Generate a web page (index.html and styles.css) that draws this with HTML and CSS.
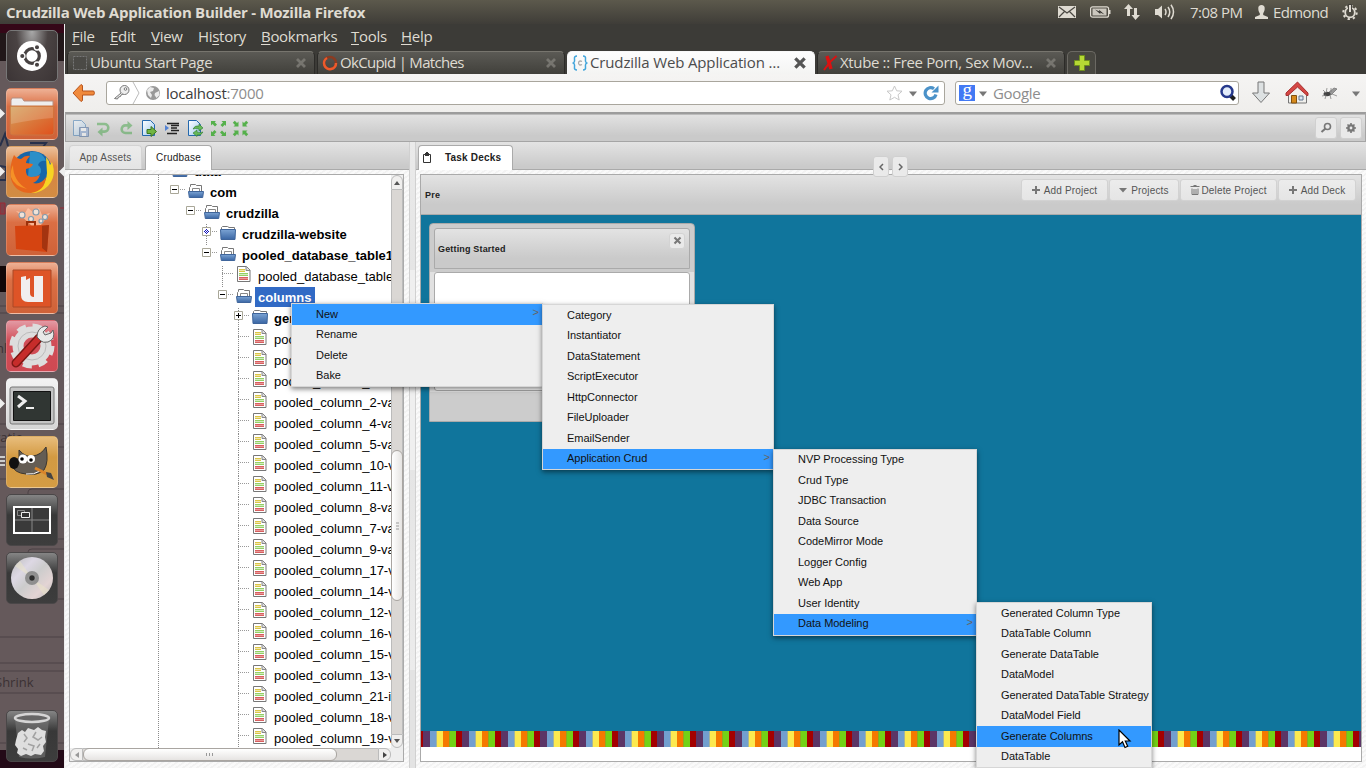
FILE: index.html
```html
<!DOCTYPE html>
<html lang="en">
<head>
<meta charset="utf-8">
<title>Crudzilla Web Application Builder</title>
<link rel="stylesheet" href="styles.css">
</head>
<body>
<svg class="defs" width="0" height="0">
  <defs>
    <linearGradient id="gBlue" x1="0" y1="0" x2="0" y2="1"><stop offset="0" stop-color="#7ba3d3"/><stop offset="1" stop-color="#3a66a4"/></linearGradient>
    <linearGradient id="gFile" x1="0" y1="0" x2="1" y2="1"><stop offset="0" stop-color="#d3a25c"/><stop offset="1" stop-color="#e0501c"/></linearGradient>
    <linearGradient id="gPage" x1="0" y1="0" x2="1" y2="1"><stop offset="0" stop-color="#fff"/><stop offset="1" stop-color="#9cc8ef"/></linearGradient>
    <linearGradient id="gDisc" x1="0" y1="0" x2="1" y2="1"><stop offset="0" stop-color="#bbb"/><stop offset=".3" stop-color="#ddd8e4"/><stop offset=".5" stop-color="#ccc"/><stop offset=".75" stop-color="#e3d4d4"/><stop offset="1" stop-color="#bbb"/></linearGradient>
  </defs>
  <symbol id="doc" viewBox="0 0 14 16"><path d="M.5.5h9l3.500 3.500v11.500H.5z" fill="#fff" stroke="#777"/><path d="M9 .5V4.500h4" fill="#ddd" stroke="#888"/><path d="M2 3h6v1H2zM2 5h6v1H2z" fill="#dcc544"/><path d="M2 4h6v1H2z" fill="#efe6ae"/><path d="M2 7h9v1H2zM2 9h9v1H2z" fill="#93cf66"/><path d="M2 8h9v1H2z" fill="#d3ecc0"/><path d="M2 11h9v1H2zM2 13h9v1H2z" fill="#d85f5f"/><path d="M2 12h9v1H2z" fill="#e79a9a"/></symbol>
  <symbol id="fopen" viewBox="0 0 16 14"><path d="M1.500 8V3.500l1-1V.5h5l1 1h5V8" fill="#fff" stroke="#777"/><path d="M4.500 7V4.500h7V7" fill="#fff" stroke="#888"/><path d="M.5 7.500h15l-.8 6H1.300z" fill="url(#gBlue)" stroke="#3f659b"/></symbol>
  <symbol id="fclosed" viewBox="0 0 16 14"><path d="M1.500 4V1.500l1-1h5l1.500 1h5.500V4" fill="#fff" stroke="#777"/><path d="M.5 3.500h15l-.5 10H1z" fill="url(#gBlue)" stroke="#3f659b"/></symbol>
  <symbol id="minus" viewBox="0 0 9 9"><path d="M.5.5h8v8h-8z" fill="#fff" stroke="#a9a798"/><path d="M2 4.500h5" stroke="#000"/></symbol>
  <symbol id="plus" viewBox="0 0 9 9"><path d="M.5.5h8v8h-8z" fill="#fff" stroke="#a9a798"/><path d="M2 4.500h5M4.500 2v5" stroke="#000"/></symbol>
  <symbol id="load" viewBox="0 0 9 9"><path d="M.5.5h8v8h-8z" fill="#fff" stroke="#a9a798"/><path d="M4 2h1v1H4zM3 3h1v1H3zM5 3h1v1H5zM2 4h1v1H2zM4 4h1v1H4zM6 4h1v1H6zM3 5h1v1H3zM5 5h1v1H5zM4 6h1v1H4z" fill="#11b"/></symbol>
  <symbol id="x" viewBox="0 0 12 12"><path d="M2 2l8 8M10 2l-8 8" stroke="currentColor" stroke-width="2.800"/></symbol>
  <symbol id="globe" viewBox="0 0 16 16"><circle cx="8" cy="8" r="7" fill="#999"/><path d="M2 5l3-3 4 1-1 3-3 1 2 3-1 3-3-3zM10 8l4-2 .5 4-3 3-2-3z" fill="#ececec"/></symbol>
</svg>

<header class="panel">
  <span class="panel-title">Crudzilla Web Application Builder - Mozilla Firefox</span>
  <div class="tray">
    <svg width="18" height="12" viewBox="0 0 18 12"><path d="M0 0h18v12H0z" fill="#dfdbd2"/><path d="M1 1l8 6 8-6M1 11l5.500-5.500M17 11l-5.500-5.500" fill="none" stroke="#4a4842" stroke-width="1.200"/></svg>
    <svg class="t-bat" width="21" height="12" viewBox="0 0 21 12"><rect x=".6" y=".8" width="18" height="10.400" rx="2" fill="none" stroke="#dfdbd2" stroke-width="1.200"/><path d="M2.500 2.500h14v7h-14z" fill="#cbc7be"/><path d="M19.500 4v4" stroke="#dfdbd2" stroke-width="2"/><path d="M5 3.500l4.500 2L9 3.800l5.500 4.700-4.500-2 .5 1.700z" fill="#33322e"/></svg>
    <svg class="t-net" width="18" height="16" viewBox="0 0 18 16"><path d="M5.500 0L10 5H7v7H4V5H1zM12.500 16L8.500 11H11V4h3v7h3z" fill="#dfdbd2"/></svg>
    <svg class="t-vol" width="21" height="16" viewBox="0 0 21 16"><path d="M0 5h3l4-3.500v13L3 11H0z" fill="#dfdbd2"/><path d="M10 5q2 3 0 6M13 3q3.500 5 0 10M16 .8q5 7 0 14.400" fill="none" stroke="#dfdbd2" stroke-width="1.500"/></svg>
    <span class="clock">7:08 PM</span>
    <svg class="t-usr" width="13" height="14" viewBox="0 0 13 14"><path d="M3.300 4C3 1 4.500 0 6.500 0s3.500 1 3.200 4c-.2 2-1 3.500-1.500 4.200V10l4.800 2v2H0v-2l4.800-2V8.200C4 7.500 3.500 6 3.300 4z" fill="#dfdbd2"/></svg>
    <span class="user">Edmond</span>
    <svg class="t-gear" width="16" height="16" viewBox="0 0 16 16"><circle cx="8" cy="8.500" r="4.800" fill="none" stroke="#dfdbd2" stroke-width="1.800"/><circle cx="8" cy="8.500" r="6.700" fill="none" stroke="#dfdbd2" stroke-width="2" stroke-dasharray="2.300 2.960"/><path d="M8 0v8" stroke="#45433d" stroke-width="4"/><path d="M8 1v7" stroke="#dfdbd2" stroke-width="2"/></svg>
  </div>
</header>

<div class="desktop">
  <aside class="launcher">
    <svg class="ghost" width="64" height="744" viewBox="0 24 64 744">
      <path d="M0 24h64v9H0z" fill="#350718"/><path d="M0 33h64v28H0z" fill="#211719"/><path d="M0 750h64v18H0z" fill="#230a17"/>
      <g fill="none" stroke="#4d4246" stroke-width="1"><path d="M0 306h64M0 313h64M0 424h64M0 447h64M0 479h30M28 500v-8q0-3 4-3h32M58 539h6M28 560v-8q0-3 4-3h32M58 599h6M0 637h64M0 663h64M0 671h64M0 693h64M0 743h64"/></g>
      <path d="M0 266h6v26H0z" fill="#120708"/><path d="M0 203h5v11H0zM60 208h4" fill="#7c4149" stroke="#9d2835"/><path d="M0 146l5-12 3 12M30 143h16l-3 4M0 166l6 1v13H0" fill="none" stroke="#27304a" stroke-width="2"/>
      <g class="ghost-text"><text x="-4" y="353">nl</text><text x="-5" y="442">ratio</text><text x="-5" y="687">Shrink</text></g>
      <path d="M0 108.500l5 5-5 5zM0 166.500l5 5-5 5zM0 398.500l5 5-5 5zM64 166.500l-5 5 5 5z" fill="#eee"/><path d="M0 457h5M0 461h5M0 465h5" stroke="#ccc" stroke-width="2"/>
    </svg>
    <div class="tile t-dash"><svg viewBox="0 0 52 52"><circle cx="26" cy="26" r="15" fill="#fff"/><circle cx="26" cy="26" r="7.300" fill="none" stroke="#474242" stroke-width="3.200"/><g fill="#474242" stroke="#fff" stroke-width="1.300"><circle cx="16.300" cy="26" r="2.700"/><circle cx="31" cy="17.300" r="2.700"/><circle cx="31" cy="34.700" r="2.700"/></g></svg></div>
    <div class="tile t-orange"><svg viewBox="0 0 52 52"><path d="M5 20v-8l1-2h10l2 3h29v8z" fill="#eee" stroke="#b58e80"/><path d="M4 18h44v26q0 3-3 3H7q-3 0-3-3z" fill="url(#gFile)" stroke="#cb7442"/><path d="M5 19h42v11Q30 31 5 36z" fill="#fff" opacity=".17"/></svg></div>
    <div class="tile t-amber"><svg viewBox="0 0 52 52"><circle cx="26" cy="25" r="20" fill="#1765a8"/><path d="M24 6q12-2 16 9-6-1-8 4 5 4 2 9-4 4-12 3" fill="#2b8fc8"/><path d="M40 11q3 3 4 8l2-3q5 14-4 24-8 8-19 7 17-5 18-20z" fill="#f7d324"/><path d="M8 9q3 4 7 4 4-4 9-3-4 4-4 7l7 1q-1 4-7 5-1 7 5 8 5 0 9-2-2 6-7 8 8 2 13-6-1 14-15 16-16 0-20-14Q3 19 8 9z" fill="#e7661d"/><path d="M7 19q0 16 14 24Q8 40 5 31q-1-6 2-12z" fill="#f59127"/></svg></div>
    <div class="tile t-orange"><svg viewBox="0 0 52 52"><path d="M26 22L10 7l9 2 3-5 5 4 6-4 3 7 8-2-9 12z" fill="#ffc5a6" opacity=".8"/><g fill="#f1e2d7" stroke="#829aad" stroke-width="1.200"><circle cx="16" cy="11" r="3"/><circle cx="30" cy="8" r="3"/><circle cx="39" cy="13" r="2.500"/><circle cx="25" cy="15" r="2.500"/><circle cx="35" cy="17" r="2"/></g><path d="M21 22v-4h8v4" fill="none" stroke="#9b300b" stroke-width="2"/><path d="M9 22l34-1-2 27-31-3z" fill="#d54411"/><path d="M36 22l7-1-2 27-5-4z" fill="#a43410"/></svg></div>
    <div class="tile t-orange"><svg viewBox="0 0 52 52"><path d="M7 8h38v37H7z" fill="#de5427" stroke="#aa4827"/><path d="M15 15l5-1v4l4-2v15q0 4 4 4V14h9v26H22q-7 0-7-7z" fill="#f1eeee"/></svg></div>
    <div class="tile t-red"><svg viewBox="0 0 52 52"><circle cx="26" cy="26" r="14" fill="none" stroke="#ddd" stroke-width="11"/><circle cx="26" cy="26" r="20" fill="none" stroke="#ddd" stroke-width="5" stroke-dasharray="9 6.700"/><circle cx="26" cy="26" r="14" fill="none" stroke="#bbb" stroke-width="1"/><path d="M10 43l23-25" stroke="#7c1713" stroke-width="9" stroke-linecap="round"/><path d="M10 43l23-25" stroke="#c62c2a" stroke-width="6" stroke-linecap="round"/><path d="M31 17q0-9 8-11l3 1-5 5 2 3 6-2 2-3q3 9-5 12-5 1-7-1z" fill="#e8e8e8" stroke="#666"/></svg></div>
    <div class="tile t-silver"><svg viewBox="0 0 52 52"><rect x="4" y="9" width="44" height="37" rx="2" fill="#c4c4c4" stroke="#777"/><path d="M7.500 13.500h37v29h-37z" fill="#303633" stroke="#111"/><path d="M12 18l7 5-7 6" fill="none" stroke="#eee" stroke-width="3"/><path d="M20 30h8" stroke="#eee" stroke-width="2"/></svg></div>
    <div class="tile t-gold"><svg viewBox="0 0 52 52"><path d="M13 14q7 8 14 6 8-1 13-9 3 15-2 23-7 6-18 4Q8 37 6 29q2-5 7-7z" fill="#645d54" stroke="#3b3630"/><ellipse cx="8" cy="27" rx="5" ry="6" fill="#111"/><circle cx="17" cy="23" r="4.500" fill="#fff"/><circle cx="25" cy="23" r="4" fill="#fff"/><circle cx="16" cy="23" r="1.800"/><circle cx="25" cy="24" r="1.800"/><path d="M20 38q8 1 14-3" stroke="#fff" fill="none"/><path d="M29 32l12 6" stroke="#d8842a" stroke-width="3"/><path d="M40 36l5 1 3 7-7-3z" fill="#444"/></svg></div>
    <div class="tile t-dark"><svg viewBox="0 0 52 52"><rect x="8" y="13" width="36" height="26" fill="#3a3a3a" stroke="#fff" stroke-width="2"/><path d="M26 14v24M9 26h34" stroke="#888"/><path d="M11.500 16.500h7v5h-7z" fill="none" stroke="#888"/><path d="M15.500 18.500h8v5h-8z" fill="#333" stroke="#eee"/></svg></div>
    <div class="tile t-dark"><svg viewBox="0 0 52 52"><circle cx="26" cy="26" r="21" fill="url(#gDisc)"/><path d="M26 26L9 14l5-5zM26 26l17 12-5 5z" fill="#ece5c7" opacity=".5"/><circle cx="26" cy="26" r="7" fill="#8f8f8f"/><circle cx="26" cy="26" r="3.200" fill="#2e2e2e" stroke="#ccc" stroke-width=".5"/></svg></div>
    <div class="tile t-dark t-trash"><svg viewBox="0 0 52 52"><path d="M9 9l4 38q13 3 26 0l4-38z" fill="#777" opacity=".6"/><path d="M12 23l4-3 3 2 3-4 6 2 4-3 4 3 4 1-1 6 1 5-3 4 1 5-3 4-6-1-4 2-5-2-5 2-4-3 1-4-3-4 1-5z" fill="#dedede"/><path d="M18 24l3 4-3 4M30 22l-3 5 5 3 4-3M22 34l6 2-2 5M34 34l-3 4M17 38l4 2" fill="none" stroke="#a2a2a2" stroke-width="1.500"/><ellipse cx="26" cy="8" rx="17" ry="4" fill="#666" stroke="#d5d5d5" stroke-width="2.500"/></svg></div>
  </aside>

  <section class="browser">
    <nav class="menubar">
      <span class="w24"><u>F</u>ile</span><span class="w27"><u>E</u>dit</span><span class="w33"><u>V</u>iew</span><span class="w49">Hi<u>s</u>tory</span><span class="w76"><u>B</u>ookmarks</span><span class="w36"><u>T</u>ools</span><span class="w31"><u>H</u>elp</span>
    </nav>
    <div class="tabs">
      <div class="tab"><svg width="16" height="16"><rect x="1.500" y="1.500" width="13" height="13" fill="#4b4a46" stroke="#777" stroke-dasharray="2 1"/></svg><span>Ubuntu Start Page</span><svg class="close" width="12" height="12"><use href="#x"/></svg></div>
      <div class="tab tight"><svg width="16" height="16"><circle cx="8" cy="8" r="6" fill="none" stroke="#8b3b21" stroke-width="2.500"/><path d="M5 3a6 6 0 1 0 9 5" fill="none" stroke="#ec5a2c" stroke-width="2.500"/></svg><span>OkCupid | Matches</span><svg class="close" width="12" height="12"><use href="#x"/></svg></div>
      <div class="tab on"><svg width="16" height="16" fill="none"><path d="M5 1Q2 1 2.500 4q.5 4-2 4 2.500 0 2 4-.5 3 2.500 3M11 1q3 0 2.500 3-.5 4 2 4-2.500 0-2 4 .5 3-2.500 3" stroke="#42a5db" stroke-width="1.500"/><path d="M10 6.500q-3-1.500-3.500 1.500.5 3 3.500 1.500" stroke="#aaa" stroke-width="1.300"/></svg><span>Crudzilla Web Application …</span><svg class="close" width="14" height="14" viewBox="0 0 12 12"><use href="#x" width="12" height="12"/></svg></div>
      <div class="tab"><svg width="16" height="16" fill="none" stroke="#dc1111"><path d="M5 1l4 13" stroke-width="3.500"/><path d="M14.500 1Q7 7 2 15" stroke-width="2"/></svg><span>Xtube :: Free Porn, Sex Mov…</span><svg class="close" width="12" height="12"><use href="#x"/></svg></div>
      <div class="newtab"><svg width="16" height="16"><path d="M5.500.5h5v5h5v5h-5v5h-5v-5h-5v-5h5z" fill="#b5d834" stroke="#6e8e1c"/></svg></div>
    </div>
    <div class="navbar">
      <svg class="back" width="23" height="20" viewBox="0 0 23 20"><path d="M9 1.500L1 10l8 8.500 1.500-1V12H21q1.300 0 1.300-1.200V9.200Q22.300 8 21 8H10.500V2.500z" fill="#f08a3c" stroke="#b8541c"/></svg>
      <div class="url">
        <svg width="34" height="22" viewBox="0 0 34 22"><path d="M26 0l6 11-6 11" fill="none" stroke="#bbb"/><circle cx="17.500" cy="8" r="4.500" fill="#eee" stroke="#777"/><circle cx="18.500" cy="7" r="1.300" fill="#fff" stroke="#777"/><path d="M14 11l-6.500 5.500 3 .5 1-2 2-.5.5-1.500 2-1" fill="#eee" stroke="#777"/></svg>
        <svg class="globe" width="16" height="16"><use href="#globe"/></svg>
        <span class="addr">localhost<i>:7000</i></span>
        <svg width="17" height="16" viewBox="0 0 17 16"><path d="M8.500 1l2.200 4.800 5.300.4-4 3.600 1.200 5.200-4.700-2.700L3.800 15 5 9.800 1 6.200l5.300-.4z" fill="#fff" stroke="#c8c8c8"/></svg>
        <svg class="dd" width="8" height="6"><path d="M0 .5h8l-4 5z" fill="#777"/></svg>
        <svg class="reload" width="16" height="16" viewBox="0 0 16 16"><path d="M13 9.500A5.500 5.500 0 1 1 11 3.700" fill="none" stroke="#4b92c9" stroke-width="3.200"/><path d="M15.500.5v7h-7z" fill="#4b92c9"/></svg>
      </div>
      <div class="search">
        <b class="g">g</b><svg class="dd" width="8" height="6"><path d="M0 .5h8l-4 5z" fill="#777"/></svg><span>Google</span>
        <svg width="18" height="18" viewBox="0 0 18 18"><path d="M11 11l4.500 4.500" stroke="#222" stroke-width="4"/><circle cx="8" cy="7.500" r="5.500" fill="#e3ecfa" stroke="#26398c" stroke-width="2.500"/></svg>
      </div>
      <svg class="down" width="20" height="24" viewBox="0 0 20 24"><path d="M7 1h6v11h5.500L10 21.500 1.500 12H7z" fill="#dde1e2" stroke="#777"/></svg>
      <svg class="home" width="24" height="24" viewBox="0 0 24 24"><path d="M3.500 12v10h18V12l-9-8z" fill="#f0efec" stroke="#777"/><path d="M6.500 14.500h5V22h-5z" fill="#d68a1c" stroke="#80500f"/><path d="M14 15h4v4h-4z" fill="#dbe6f2" stroke="#607790"/><path d="M1 12v2.500h2L12.500 6l9.500 8.500h1V12L12.500 1z" fill="#d54744" stroke="#a72f30"/></svg>
      <svg class="fly" width="18" height="16" viewBox="0 0 18 16"><path d="M7 8l6-5 3 1-6 6z" fill="#999" stroke="#888"/><ellipse cx="6" cy="9" rx="3.500" ry="2.200" fill="#444"/><path d="M2 5l3 3 1-5M1 11l4-1-1 4M9 10l1 4M11 9l5 2M10 7V3" stroke="#777" stroke-width=".7" fill="none"/></svg>
      <svg class="dd" width="8" height="6"><path d="M0 .5h8l-4 5z" fill="#777"/></svg>
    </div>

    <main class="app">
      <div class="toolbar">
        <svg class="dim" width="17" height="17" viewBox="0 0 17 17"><path d="M1.500.5h8l4 4v11h-12z" fill="url(#gPage)" stroke="#3977b3"/><path d="M7.500 7.500h9v9h-9z" fill="#7d9ed0" stroke="#3b5f96"/><path d="M9 8h5v3H9zM10 13h4v3h-4z" fill="#fff"/></svg>
        <svg class="dim" width="17" height="17" viewBox="0 0 17 17"><path d="M2 4h7.500a3.800 3.800 0 0 1 0 7.600H7" fill="none" stroke="#45a447" stroke-width="2.600"/><path d="M7.500 7.500v9L2.500 12z" fill="#45a447"/></svg>
        <svg class="dim" width="17" height="17" viewBox="0 0 17 17"><path d="M10 5.400H7.500a3.800 3.800 0 0 0 0 7.600H14" fill="none" stroke="#45a447" stroke-width="2.600"/><path d="M9.500 1v9l5-4.500z" fill="#45a447"/></svg>
        <svg width="17" height="17" viewBox="0 0 17 17"><path d="M1.500.5h8l4 4v11h-12z" fill="url(#gPage)" stroke="#2468ad"/><path d="M6 9.500h4v-3l5.500 5-5.500 5v-3H6z" fill="#72b642" stroke="#3b7420"/></svg>
        <svg width="17" height="17" viewBox="0 0 17 17"><path d="M3 3.500h12M7 5.500h8M7 8h6M7 10.500h8M3 13.500h10" stroke="#222" stroke-width="1.400"/><path d="M1 5l4 3-4 3z" fill="#5382d4"/></svg>
        <svg width="17" height="17" viewBox="0 0 17 17"><path d="M1.500.5h8l4 4v11h-12z" fill="url(#gPage)" stroke="#2468ad"/><path d="M6 9q2-4 6-3V4l4 4-4 3V9q-4-1-6 0zM16 12q-2 4-6 3v1.500L6 13l4-3v2q4 1 6 0z" fill="#65b858" stroke="#2f7b30" stroke-width=".6"/></svg>
        <svg class="arrows" width="17" height="17" viewBox="0 0 17 17"><path fill="#48ad3d" d="M1 1h5L4.700 2.300 7 4.500 5 6.500 2.500 4 1 5.500zM16 1v5l-1.300-1.300L12.500 7l-2-2L13 2.500 11.500 1zM1 16v-5l1.300 1.300L4.500 10l2 2L4 14.500 5.500 16zM16 16h-5l1.300-1.300L10 12.500l2-2L14.500 13 16 11.500z"/></svg>
        <svg class="arrows" width="17" height="17" viewBox="0 0 17 17"><path fill="#48ad3d" d="M6.500 6.500h-5L3 5 .8 2.800l2-2L5 3l1.500-1.500zM10.500 6.500v-5L12 3 14.200.8l2 2L14 5l1.500 1.500zM6.500 10.500v5L5 14l-2.200 2.200-2-2L3 12l-1.500-1.500zM10.500 10.500h5L14 12l2.200 2.200-2 2L12 14l-1.500 1.500z"/></svg>
        <span class="grow"></span>
        <button class="ib"><svg width="12" height="12" viewBox="0 0 12 12"><circle cx="7.500" cy="4.500" r="3" fill="none" stroke="#777" stroke-width="1.600"/><path d="M5.500 6.500L1.500 10" stroke="#777" stroke-width="2"/></svg></button>
        <button class="ib"><svg width="12" height="12" viewBox="0 0 12 12"><circle cx="6" cy="6" r="2.600" fill="none" stroke="#777" stroke-width="2.400"/><path d="M6 1v2M6 9v2M1 6h2M9 6h2M2.500 2.500L4 4M8 8l1.500 1.500M9.500 2.500L8 4M4 8L2.500 9.500" stroke="#777" stroke-width="1.600"/></svg></button>
      </div>

      <div class="panes">
        <section class="left">
          <div class="strip"><span class="jt">App Assets</span><span class="jt on">Crudbase</span></div>
          <div class="treebox">
            <div class="tree">
              <div class="row top"><svg class="f" width="16" height="14"><use href="#fopen"/></svg><b>data</b></div>
              <div class="row d1"><svg class="e" width="9" height="9"><use href="#minus"/></svg><i></i><svg class="f" width="16" height="14"><use href="#fopen"/></svg><b>com</b></div>
              <div class="row d2"><svg class="e" width="9" height="9"><use href="#minus"/></svg><i></i><svg class="f" width="16" height="14"><use href="#fopen"/></svg><b>crudzilla</b></div>
              <div class="row d3 line"><svg class="e" width="9" height="9"><use href="#load"/></svg><i></i><svg class="f" width="16" height="14"><use href="#fclosed"/></svg><b>crudzilla-website</b></div>
              <div class="row d3"><svg class="e" width="9" height="9"><use href="#minus"/></svg><i></i><svg class="f" width="16" height="14"><use href="#fopen"/></svg><b>pooled_database_table1</b></div>
              <div class="row d4 line leaf"><i></i><svg width="14" height="16"><use href="#doc"/></svg><span>pooled_database_table</span></div>
              <div class="row d4"><svg class="e" width="9" height="9"><use href="#minus"/></svg><i></i><svg class="f" width="16" height="14"><use href="#fopen"/></svg><b class="sel">columns</b></div>
              <div class="row d5 line"><svg class="e" width="9" height="9"><use href="#plus"/></svg><i></i><svg class="f" width="16" height="14"><use href="#fclosed"/></svg><b>gen</b></div>
              <div class="row d5 line leaf"><i></i><svg width="14" height="16"><use href="#doc"/></svg><span>pooled_column_1-va</span></div>
              <div class="row d5 line leaf"><i></i><svg width="14" height="16"><use href="#doc"/></svg><span>pooled_column_3-va</span></div>
              <div class="row d5 line leaf"><i></i><svg width="14" height="16"><use href="#doc"/></svg><span>pooled_column_6-va</span></div>
              <div class="row d5 line leaf"><i></i><svg width="14" height="16"><use href="#doc"/></svg><span>pooled_column_2-va</span></div>
              <div class="row d5 line leaf"><i></i><svg width="14" height="16"><use href="#doc"/></svg><span>pooled_column_4-va</span></div>
              <div class="row d5 line leaf"><i></i><svg width="14" height="16"><use href="#doc"/></svg><span>pooled_column_5-va</span></div>
              <div class="row d5 line leaf"><i></i><svg width="14" height="16"><use href="#doc"/></svg><span>pooled_column_10-v</span></div>
              <div class="row d5 line leaf"><i></i><svg width="14" height="16"><use href="#doc"/></svg><span>pooled_column_11-v</span></div>
              <div class="row d5 line leaf"><i></i><svg width="14" height="16"><use href="#doc"/></svg><span>pooled_column_8-va</span></div>
              <div class="row d5 line leaf"><i></i><svg width="14" height="16"><use href="#doc"/></svg><span>pooled_column_7-va</span></div>
              <div class="row d5 line leaf"><i></i><svg width="14" height="16"><use href="#doc"/></svg><span>pooled_column_9-va</span></div>
              <div class="row d5 line leaf"><i></i><svg width="14" height="16"><use href="#doc"/></svg><span>pooled_column_17-v</span></div>
              <div class="row d5 line leaf"><i></i><svg width="14" height="16"><use href="#doc"/></svg><span>pooled_column_14-v</span></div>
              <div class="row d5 line leaf"><i></i><svg width="14" height="16"><use href="#doc"/></svg><span>pooled_column_12-v</span></div>
              <div class="row d5 line leaf"><i></i><svg width="14" height="16"><use href="#doc"/></svg><span>pooled_column_16-v</span></div>
              <div class="row d5 line leaf"><i></i><svg width="14" height="16"><use href="#doc"/></svg><span>pooled_column_15-v</span></div>
              <div class="row d5 line leaf"><i></i><svg width="14" height="16"><use href="#doc"/></svg><span>pooled_column_13-v</span></div>
              <div class="row d5 line leaf"><i></i><svg width="14" height="16"><use href="#doc"/></svg><span>pooled_column_21-in</span></div>
              <div class="row d5 line leaf"><i></i><svg width="14" height="16"><use href="#doc"/></svg><span>pooled_column_18-v</span></div>
              <div class="row d5 line leaf"><i></i><svg width="14" height="16"><use href="#doc"/></svg><span>pooled_column_19-v</span></div>
            </div>
            <div class="vbar"><span class="cap up"><svg width="6" height="4"><path d="M0 4l3-4 3 4z" fill="#555"/></svg></span><div class="track"><div class="thumb"><svg width="3" height="8"><path d="M0 1h3M0 4h3M0 7h3" stroke="#999"/></svg></div></div><span class="cap dn"><svg width="6" height="4"><path d="M0 0l3 4 3-4z" fill="#555"/></svg></span></div>
            <div class="hbar"><span class="cap lf"><svg width="4" height="6"><path d="M4 0L0 3l4 3z" fill="#999"/></svg></span><div class="track"><div class="thumb"><svg width="8" height="3"><path d="M.5 0v3M3.500 0v3M6.500 0v3" stroke="#999"/></svg></div></div><span class="cap rt"><svg width="4" height="6"><path d="M0 0l4 3-4 3z" fill="#444"/></svg></span></div>
          </div>
        </section>
        <div class="splitter"></div>
        <section class="right">
          <div class="strip"><span class="jt on deck"><svg width="10" height="12" viewBox="0 0 10 12"><path d="M1.500 2.500h7v8h-7z" fill="#fff" stroke="#333"/><path d="M3 1h4v3H3z" fill="#333"/><path d="M4 0h2v1H4z" fill="#333"/></svg>Task Decks</span></div>
          <div class="pager"><span><svg width="5" height="8"><path d="M4 1L1 4l3 3" fill="none" stroke="#666" stroke-width="1.500"/></svg></span><span><svg width="5" height="8"><path d="M1 1l3 3-3 3" fill="none" stroke="#666" stroke-width="1.500"/></svg></span></div>
          <div class="deckbox">
            <div class="deckhead"><b>Pre</b>
              <div class="btns">
                <button class="b1"><svg width="8" height="8"><path d="M4 0v8M0 4h8" stroke="#777" stroke-width="2"/></svg>Add Project</button><button class="b2"><svg width="8" height="5"><path d="M0 0h8L4 4.500z" fill="#777"/></svg>Projects</button><button class="b3"><svg width="10" height="10"><path d="M.5 1.500h9M3.500.5h3M2 3.500v6h6v-6M4 4v5M6 4v5" fill="none" stroke="#777"/></svg>Delete Project</button><button class="b4"><svg width="8" height="8"><path d="M4 0v8M0 4h8" stroke="#777" stroke-width="2"/></svg>Add Deck</button>
              </div>
            </div>
            <div class="canvas">
              <div class="card"><div class="cardhead"><b>Getting Started</b><span class="cx"><svg width="9" height="9" viewBox="0 0 12 12"><use href="#x" width="12" height="12"/></svg></span></div><div class="cardbody"></div></div>
            </div>
            <div class="stripes"></div>
          </div>
        </section>
      </div>
    </main>
  </section>
</div>

<ul class="menu m1"><li class="hl">New<em>&gt;</em></li><li>Rename</li><li>Delete</li><li>Bake</li></ul>
<ul class="menu m2"><li>Category</li><li>Instantiator</li><li>DataStatement</li><li>ScriptExecutor</li><li>HttpConnector</li><li>FileUploader</li><li>EmailSender</li><li class="hl">Application Crud<em>&gt;</em></li></ul>
<ul class="menu m3"><li>NVP Processing Type</li><li>Crud Type</li><li>JDBC Transaction</li><li>Data Source</li><li>CodeMirror Mode</li><li>Logger Config</li><li>Web App</li><li>User Identity</li><li class="hl">Data Modeling<em>&gt;</em></li></ul>
<ul class="menu m4"><li>Generated Column Type</li><li>DataTable Column</li><li>Generate DataTable</li><li>DataModel</li><li>Generated DataTable Strategy</li><li>DataModel Field</li><li class="hl">Generate Columns</li><li>DataTable</li></ul>
<svg class="cursor" width="14" height="20" viewBox="0 0 14 20"><path d="M1 1v15l3.500-3.200L7 18.500l2.700-1.200L7.300 12H12z" fill="#fff" stroke="#000" stroke-width="1.200"/></svg>
</body>
</html>
```
FILE: styles.css
```css
* { box-sizing: border-box; }
body { margin: 0; width: 1366px; height: 768px; overflow: hidden; position: relative; display: flex; flex-direction: column; font-family: "Liberation Sans", sans-serif; }
svg { display: block; flex: none; }
.defs { position: absolute; }
button { font: inherit; margin: 0; padding: 0; }
ul { list-style: none; margin: 0; padding: 0; }

/* top panel */
.panel { height: 24px; flex: none; display: flex; justify-content: space-between; align-items: center; padding: 0 8px 0 6px; background: linear-gradient(#5c594c, #3f3d38); color: #dfdbd2; font: 15px/24px "Open Sans", sans-serif; white-space: nowrap; }
.panel-title { width: 380px; font-weight: 700; letter-spacing: -.26px; }
.tray { display: flex; align-items: center; }
.t-bat { margin-left: 14px; }
.t-net { margin-left: 12px; }
.t-vol { margin-left: 14px; }
.clock { width: 53px; margin-left: 14px; letter-spacing: -.5px; }
.t-usr { margin-left: 12px; }
.user { width: 56px; margin-left: 5px; letter-spacing: -.6px; }
.t-gear { margin-left: 13px; }

.desktop { display: flex; flex: 1; min-height: 0; }

/* launcher */
.launcher { width: 65px; flex: none; padding: 6px 7px 6px 6px; display: flex; flex-direction: column; gap: 6px; background: #65595b; position: relative; border-right: 1px solid #eee; }
.ghost { position: absolute; left: 0; top: 0; }
.ghost-text { font: 13px "Open Sans", sans-serif; fill: #3b3134; }
.tile { width: 52px; height: 52px; flex: none; border-radius: 5px; position: relative; border: 1px solid rgba(255,255,255,.18); }
.tile svg { width: 52px; height: 52px; margin: -1px; }
.t-dash { background: radial-gradient(ellipse at 50% 0, #aaa, #4a4343 45%, #3b3435 100%); border-color: #777; }
.t-orange { background: linear-gradient(#eeb195, #db6f44 35%, #cf6238); }
.t-amber { background: linear-gradient(#ecc19c, #d98342 40%, #d28d43); }
.t-red { background: linear-gradient(#e39aa4, #d14d57 40%, #cf4952); }
.t-silver { background: linear-gradient(#f3f3f3, #d5d5d5); }
.t-gold { background: linear-gradient(#e8bd7c, #d39a42 40%, #d49c44); }
.t-dark { background: linear-gradient(#858585, #383838 40%, #3d3d3d); border-color: #4a4748; }
.t-trash { margin-top: auto; }

/* browser chrome */
.browser { flex: 1; min-width: 0; display: flex; flex-direction: column; background: #3c3b37; }
.menubar { height: 26px; flex: none; display: flex; gap: 14px; padding-left: 7px; color: #dfdbd2; font: 15px/25px "Open Sans", sans-serif; letter-spacing: -.3px; white-space: nowrap; }
.menubar u { text-underline-offset: 2px; text-decoration-thickness: 1px; }
.w24 { width: 24px; } .w27 { width: 27px; } .w33 { width: 33px; } .w49 { width: 49px; } .w76 { width: 76px; } .w36 { width: 36px; } .w31 { width: 31px; }
.tabs { height: 24px; flex: none; display: flex; gap: 2px; padding: 1px 0 0 2px; color: #dfdbd2; font: 15px/23px "Open Sans", sans-serif; letter-spacing: -.35px; }
.tab { width: 248px; height: 23px; display: flex; align-items: center; gap: 2px; padding: 0 7px 0 4px; border: 1px solid #2c2b28; border-top-color: #77756e; border-bottom: 0; border-radius: 5px 5px 0 0; background: linear-gradient(#5b5a55, #41403b); white-space: nowrap; }
.tab span { flex: 1; min-width: 0; height: 22px; line-height: 21px; }
.tab .close { color: #85837d; width: 12px; height: 12px; opacity: .75; }
.tab.tight { letter-spacing: -.7px; }
.tab.on { background: linear-gradient(#fdfdfd, #f4f4f3); color: #4c4c4c; border-color: #f8f8f8; letter-spacing: -.14px; }
.tab.on .close { color: #555; width: 14px; height: 14px; opacity: 1; }
.newtab { width: 29px; height: 23px; display: flex; align-items: center; justify-content: center; border: 1px solid #6b6963; border-bottom: 0; border-radius: 5px 5px 0 0; background: #484741; }
.navbar { height: 38px; flex: none; display: flex; align-items: center; padding: 0 6px 0 7px; background: linear-gradient(#f5f4f3, #efeeec); font: 15px/22px "Open Sans", sans-serif; letter-spacing: -.25px; }
.url { width: 839px; height: 24px; margin-left: 11px; display: flex; align-items: center; border: 1px solid #a9a69d; border-radius: 3px; background: #fff; }
.addr { flex: 1; margin-left: 5px; color: #3c3c3c; }
.addr i { font-style: normal; color: #8d8d8d; }
.url .globe { margin-left: 4px; }
.url .dd { margin: 2px 6px 0 6px; }
.reload { margin-right: 5px; }
.search { width: 284px; height: 24px; margin-left: 10px; display: flex; align-items: center; border: 1px solid #a9a69d; border-radius: 3px; background: #fff; padding: 0 1px 0 3px; color: #8d8d8d; }
.g { width: 16px; height: 16px; background: #4279f4; color: #fff; font: 400 19px/10px "Liberation Serif", serif; text-align: center; }
.search .dd { margin: 2px 6px 0 4px; }
.search span { flex: 1; letter-spacing: -.35px; }
.down { margin-left: 12px; }
.home { margin-left: 14px; }
.fly { margin-left: 12px; }
.navbar > .dd { margin: 2px 0 0 13px; }

/* application */
.app { flex: 1; min-height: 0; display: flex; flex-direction: column; background: #f7f7f7 repeating-linear-gradient(145deg, #f2f2f2 0 1.500px, #fafafa 2px 4px); }
.toolbar { height: 30px; flex: none; display: flex; align-items: center; gap: 6px; padding: 1px 3px 0 6px; border: 1px solid #a5a5a5; border-top: 2px solid #9c9c9c; background: linear-gradient(#e3e3e3, #cacaca 80%); box-shadow: inset 0 1px 0 #bbb; }
.toolbar .dim { opacity: .5; }
.grow { flex: 1; }
.toolbar .arrows { opacity: .9; margin-left: -.5px; }
.ib { width: 22px; height: 22px; margin-right: -2.500px; display: flex; align-items: center; justify-content: center; border: 1px solid #d0d0d0; border-radius: 3px; background: #e9e9e9; }
.ib:last-child { margin-right: 0; }
.panes { flex: 1; min-height: 0; display: flex; }
.left { width: 344px; flex: none; display: flex; flex-direction: column; }
.strip { height: 28px; flex: none; display: flex; gap: 3px; align-items: flex-end; padding-left: 4px; border-bottom: 1px solid #aaa; background: linear-gradient(#e3e3e3, #cacaca 90%); font-size: 10px; letter-spacing: .2px; color: #555; }
.jt { height: 24px; width: 73px; display: flex; align-items: center; justify-content: center; border: 1px solid #d3d3d3; border-bottom: 0; border-radius: 4px 4px 0 0; background: linear-gradient(#ececec, #e4e4e4); }
.jt.on { height: 25px; margin-bottom: -1px; width: 67px; padding-bottom: 1px; border-color: #aaa; background: #fff; color: #212121; }
.treebox { margin: 4px 5px 6px 4px; flex: 1; min-height: 0; display: grid; grid-template: 1fr 13px / 321px 1fr; border: 1px solid #aaa; background: #eee; }
.tree { --dots: repeating-linear-gradient(#8b8b8b 0 1px, transparent 1px 2px); overflow: hidden; min-height: 0; min-width: 0; background: #fff var(--dots) 88px 0 / 1px 100% no-repeat; font-size: 13px; line-height: 21px; color: #000; }
.row { height: 21px; display: flex; align-items: flex-start; white-space: nowrap; }
.row i { flex: none; width: 5px; height: 1px; margin: 7px 4px 0 1px; background: repeating-linear-gradient(90deg, #999 0 1px, transparent 1px 2px); }
.row .e { margin-top: 3px; }
.row .f { margin: 2px 6px 0 -1px; }
.row b, .row span { flex: none; }
.top { margin-top: -14px; padding-left: 103px; }
.d1 { padding-left: 100px; } .d2 { padding-left: 116px; } .d3 { padding-left: 132px; } .d4 { padding-left: 148px; } .d5 { padding-left: 164px; }
.row.line { background: var(--dots) 152px 0 / 1px 100% no-repeat; }
.row.d3.line { background-position: 136px 0; }
.row.d5.line { background-position: 168px 0; }
.row.leaf i { width: 11px; margin: 7px 4px 0 4px; }
.leaf svg { margin-right: 7px; }
.row .sel { background: #316ac5; color: #fff; margin-left: -3px; padding: 0 3px; height: 20px; width: 60px; }
.vbar { display: flex; flex-direction: column; }
.vbar .track { flex: 1; background: #dad7d4; border: 1px solid #bbb; border-width: 0 1px; }
.vbar .thumb { height: 151px; margin: 260px -1px 0; border: 1px solid #a9a5a1; border-radius: 6px; background: linear-gradient(90deg, #fff, #e6e4e2); display: flex; align-items: center; justify-content: center; }
.cap { display: flex; align-items: center; justify-content: center; background: #f0efee; border: 1px solid #bbb; flex: none; }
.up { height: 15px; border-radius: 6px 6px 0 0; } .dn { height: 14px; border-radius: 0 0 6px 6px; }
.hbar { width: 321px; display: flex; }
.lf, .rt { width: 13px; } .lf { border-radius: 6px 0 0 6px; } .rt { border-radius: 0 6px 6px 0; }
.hbar .track { flex: 1; background: #dad7d4; border: 1px solid #bbb; border-width: 1px 0; }
.hbar .thumb { width: 254px; height: 13px; margin-top: -1px; border: 1px solid #a9a5a1; border-radius: 6px; background: linear-gradient(#fff, #e6e4e2); display: flex; align-items: center; justify-content: center; }
.splitter { width: 7px; flex: none; border: 1px solid #d0d0d0; border-width: 0 1px; background: linear-gradient(#eaeaea, #e5e5e5 128px, #efefef 128px, #efefef 328px, #e5e5e5 328px, #ececec 528px, #e3e3e3 528px); }
.right { flex: 1; min-width: 0; display: flex; flex-direction: column; position: relative; }
.right .strip { padding-left: 2px; }
.right .deck { width: 95px; justify-content: flex-start; gap: 13px; padding-left: 3px; font-weight: 700; }
.pager { position: absolute; left: 457px; top: 14px; display: flex; gap: 3px; z-index: 2; }
.pager span { width: 16px; height: 21px; display: flex; align-items: center; justify-content: center; border: 1px solid #d0d0d0; border-radius: 3px; background: #eaeaea; }
.deckbox { margin: 4px 4px 6px; flex: 1; min-height: 0; display: flex; flex-direction: column; border: 1px solid #aaa; background: #fff; }
.deckhead { height: 40px; flex: none; display: flex; align-items: center; justify-content: space-between; padding: 0 5px 0 4px; border-bottom: 1px solid #aaa; background: linear-gradient(#e3e3e3, #cacaca 75%); font-size: 9px; letter-spacing: .2px; color: #222; }
.btns { display: flex; gap: 1px; margin-bottom: 9px; }
.btns button { height: 22px; display: flex; align-items: center; justify-content: center; gap: 4px; border: 1px solid #d2d2d2; border-radius: 3px; background: linear-gradient(#ececec, #e5e5e5); color: #555; font-size: 10px; letter-spacing: .17px; white-space: nowrap; }
.btns .b1 { width: 87px; } .btns .b2 { width: 70px; } .btns .b3 { width: 97px; gap: 1px; } .btns .b4 { width: 78px; }
.canvas { height: 516px; flex: none; background: #10759c; padding: 8px; }
.card { width: 266px; height: 199px; padding: 4px; border: 1px solid #aaa; border-radius: 4px 4px 0 0; background: linear-gradient(#ccc 0 48px, #e1e1e1 48px 168px, #ccc 168px); }
.cardhead { height: 41px; display: flex; align-items: center; justify-content: space-between; padding: 0 4px 0 3px; border: 1px solid #aaa; border-radius: 3px 3px 0 0; background: linear-gradient(#e3e3e3, #cacaca 75%); font-size: 9px; color: #222; letter-spacing: .17px; }
.cx { width: 16px; height: 16px; margin-bottom: 16px; display: flex; align-items: center; justify-content: center; border: 1px solid #d3d3d3; border-radius: 3px; background: #e9e9e9; color: #777; }
.cardbody { height: 119px; margin-top: 3px; border: 1px solid #aaa; border-radius: 3px; background: #fff; }
.stripes { height: 16px; flex: none; background: repeating-linear-gradient(90deg, #5c3566 0 7px, #729fcf 7px 13px, #a5b498 13px 14px, #fce94f 14px 20px, #f57900 20px 26px, #90a820 26px 27px, #73d216 27px 33px, #a40000 33px 39px) -37px 0 / 2000px 16px; }

/* cascading context menu */
.menu { position: absolute; background: #eee; border: 1px solid #d6d6d6; box-shadow: 0 2px 5px rgba(0,0,0,.5); font-size: 11px; line-height: 20px; letter-spacing: -.03px; color: #111; white-space: nowrap; }
.menu li { height: 20.500px; padding-left: 24px; display: flex; justify-content: space-between; }
.menu li:nth-child(even) { line-height: 18px; }
.menu em { font-style: normal; color: #666; margin-right: 3px; line-height: 16px; }
.hl { background: #39f; }
.m1 { left: 291px; top: 303px; width: 252px; }
.m2 { left: 542px; top: 304px; width: 232px; }
.m3 { left: 773px; top: 449px; width: 204px; }
.m3 li, .m3 li:nth-child(even) { line-height: 19px; }
.m4 { left: 976px; top: 602px; width: 176px; }
.cursor { position: absolute; left: 1118px; top: 729px; }
```
